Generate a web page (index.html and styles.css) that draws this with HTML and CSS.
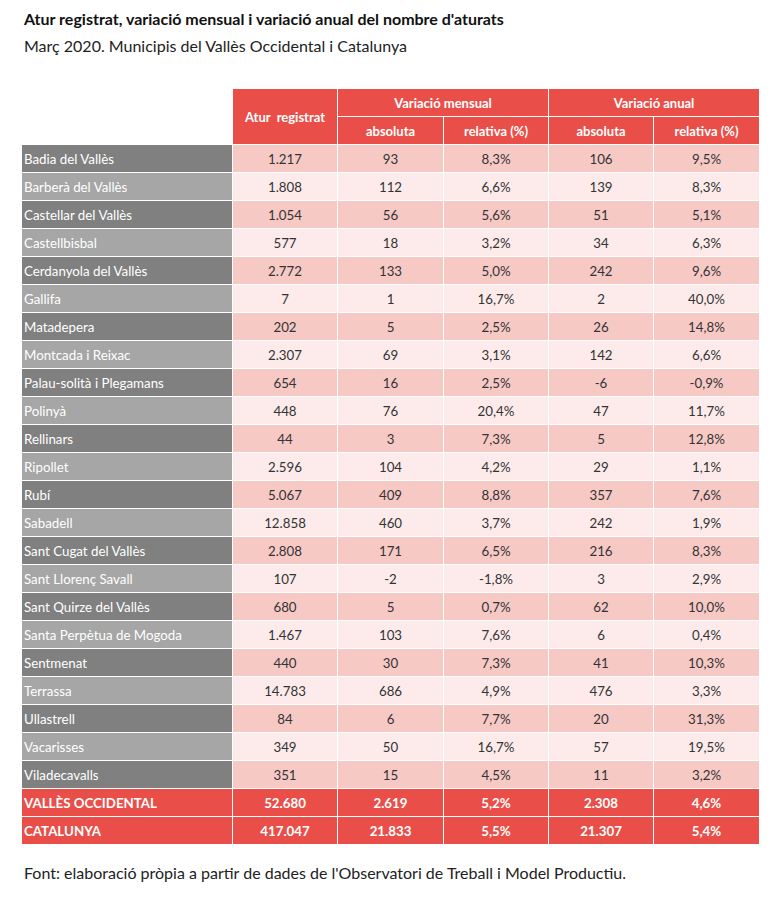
FILE: index.html
```html
<!DOCTYPE html>
<html lang="ca">
<head>
  <meta charset="UTF-8" />
  <title>Atur registrat - Vallès Occidental</title>
  <link rel="stylesheet" href="styles.css">
</head>
<body>
  <div class="report">
    <h1 class="title">Atur registrat, variació mensual i variació anual del nombre d'aturats</h1>
    <p class="subtitle">Març 2020. Municipis del Vallès Occidental i Catalunya</p>

    <table class="data">
      <colgroup>
        <col class="c-name"><col class="c-a"><col class="c-b"><col class="c-a"><col class="c-a"><col class="c-b">
      </colgroup>
      <thead>
        <tr>
          <th class="blank" rowspan="2"></th>
          <th rowspan="2">Atur&nbsp; registrat</th>
          <th colspan="2">Variació mensual</th>
          <th colspan="2">Variació anual</th>
        </tr>
        <tr>
          <th>absoluta</th>
          <th>relativa (%)</th>
          <th>absoluta</th>
          <th>relativa (%)</th>
        </tr>
      </thead>
      <tbody>
        <tr class="odd"><td>Badia del Vallès</td><td>1.217</td><td>93</td><td>8,3%</td><td>106</td><td>9,5%</td></tr>
        <tr class="even"><td>Barberà del Vallès</td><td>1.808</td><td>112</td><td>6,6%</td><td>139</td><td>8,3%</td></tr>
        <tr class="odd"><td>Castellar del Vallès</td><td>1.054</td><td>56</td><td>5,6%</td><td>51</td><td>5,1%</td></tr>
        <tr class="even"><td>Castellbisbal</td><td>577</td><td>18</td><td>3,2%</td><td>34</td><td>6,3%</td></tr>
        <tr class="odd"><td>Cerdanyola del Vallès</td><td>2.772</td><td>133</td><td>5,0%</td><td>242</td><td>9,6%</td></tr>
        <tr class="even"><td>Gallifa</td><td>7</td><td>1</td><td>16,7%</td><td>2</td><td>40,0%</td></tr>
        <tr class="odd"><td>Matadepera</td><td>202</td><td>5</td><td>2,5%</td><td>26</td><td>14,8%</td></tr>
        <tr class="even"><td>Montcada i Reixac</td><td>2.307</td><td>69</td><td>3,1%</td><td>142</td><td>6,6%</td></tr>
        <tr class="odd"><td>Palau-solità i Plegamans</td><td>654</td><td>16</td><td>2,5%</td><td>-6</td><td>-0,9%</td></tr>
        <tr class="even"><td>Polinyà</td><td>448</td><td>76</td><td>20,4%</td><td>47</td><td>11,7%</td></tr>
        <tr class="odd"><td>Rellinars</td><td>44</td><td>3</td><td>7,3%</td><td>5</td><td>12,8%</td></tr>
        <tr class="even"><td>Ripollet</td><td>2.596</td><td>104</td><td>4,2%</td><td>29</td><td>1,1%</td></tr>
        <tr class="odd"><td>Rubí</td><td>5.067</td><td>409</td><td>8,8%</td><td>357</td><td>7,6%</td></tr>
        <tr class="even"><td>Sabadell</td><td>12.858</td><td>460</td><td>3,7%</td><td>242</td><td>1,9%</td></tr>
        <tr class="odd"><td>Sant Cugat del Vallès</td><td>2.808</td><td>171</td><td>6,5%</td><td>216</td><td>8,3%</td></tr>
        <tr class="even"><td>Sant Llorenç Savall</td><td>107</td><td>-2</td><td>-1,8%</td><td>3</td><td>2,9%</td></tr>
        <tr class="odd"><td>Sant Quirze del Vallès</td><td>680</td><td>5</td><td>0,7%</td><td>62</td><td>10,0%</td></tr>
        <tr class="even"><td>Santa Perpètua de Mogoda</td><td>1.467</td><td>103</td><td>7,6%</td><td>6</td><td>0,4%</td></tr>
        <tr class="odd"><td>Sentmenat</td><td>440</td><td>30</td><td>7,3%</td><td>41</td><td>10,3%</td></tr>
        <tr class="even"><td>Terrassa</td><td>14.783</td><td>686</td><td>4,9%</td><td>476</td><td>3,3%</td></tr>
        <tr class="odd"><td>Ullastrell</td><td>84</td><td>6</td><td>7,7%</td><td>20</td><td>31,3%</td></tr>
        <tr class="even"><td>Vacarisses</td><td>349</td><td>50</td><td>16,7%</td><td>57</td><td>19,5%</td></tr>
        <tr class="odd"><td>Viladecavalls</td><td>351</td><td>15</td><td>4,5%</td><td>11</td><td>3,2%</td></tr>
        <tr class="total"><td>VALLÈS OCCIDENTAL</td><td>52.680</td><td>2.619</td><td>5,2%</td><td>2.308</td><td>4,6%</td></tr>
        <tr class="total"><td>CATALUNYA</td><td>417.047</td><td>21.833</td><td>5,5%</td><td>21.307</td><td>5,4%</td></tr>
      </tbody>
    </table>

    <p class="source">Font: elaboració pròpia a partir de dades de l'Observatori de Treball i Model Productiu.</p>
  </div>
</body>
</html>
```

FILE: styles.css
```css
body {
  margin: 0;
  background: #fff;
  font-family: Lato, "Open Sans", sans-serif;
  color: #222;
}
.report {
  padding: 9px 0 0 21px;
}
.title {
  margin: 0 0 0 3px;
  font-size: 16px;
  font-weight: bold;
  line-height: 20px;
  color: #111;
}
.subtitle {
  margin: 7px 0 0 3px;
  font-size: 16px;
  line-height: 20px;
  color: #222;
}
.data {
  margin-top: 32px;
  width: 739px;
  table-layout: fixed;
  border-collapse: separate;
  border-spacing: 1px;
  font-size: 13.3px;
}
.c-name { width: 210px; }
.c-a { width: 104px; }
.c-b { width: 105px; }
.data th,
.data td {
  height: 27px;
  padding: 0 2px;
  text-align: center;
  white-space: nowrap;
}
.data th {
  background: #e94f48;
  color: #fff;
  font-weight: bold;
  font-size: 13px;
}
.data th.blank {
  background: transparent;
}
.data td {
  color: #333;
}
.data td:first-child {
  text-align: left;
  color: #fff;
}
.odd td { background: #f7c9c5; }
.even td { background: #fcebea; }
.odd td:first-child { background: #808080; }
.even td:first-child { background: #a6a6a6; }
.total td,
.total td:first-child {
  background: #e94f48;
  color: #fff;
  font-weight: bold;
}
.source {
  margin: 18px 0 0 3px;
  font-size: 16px;
  line-height: 20px;
  color: #222;
}
```
